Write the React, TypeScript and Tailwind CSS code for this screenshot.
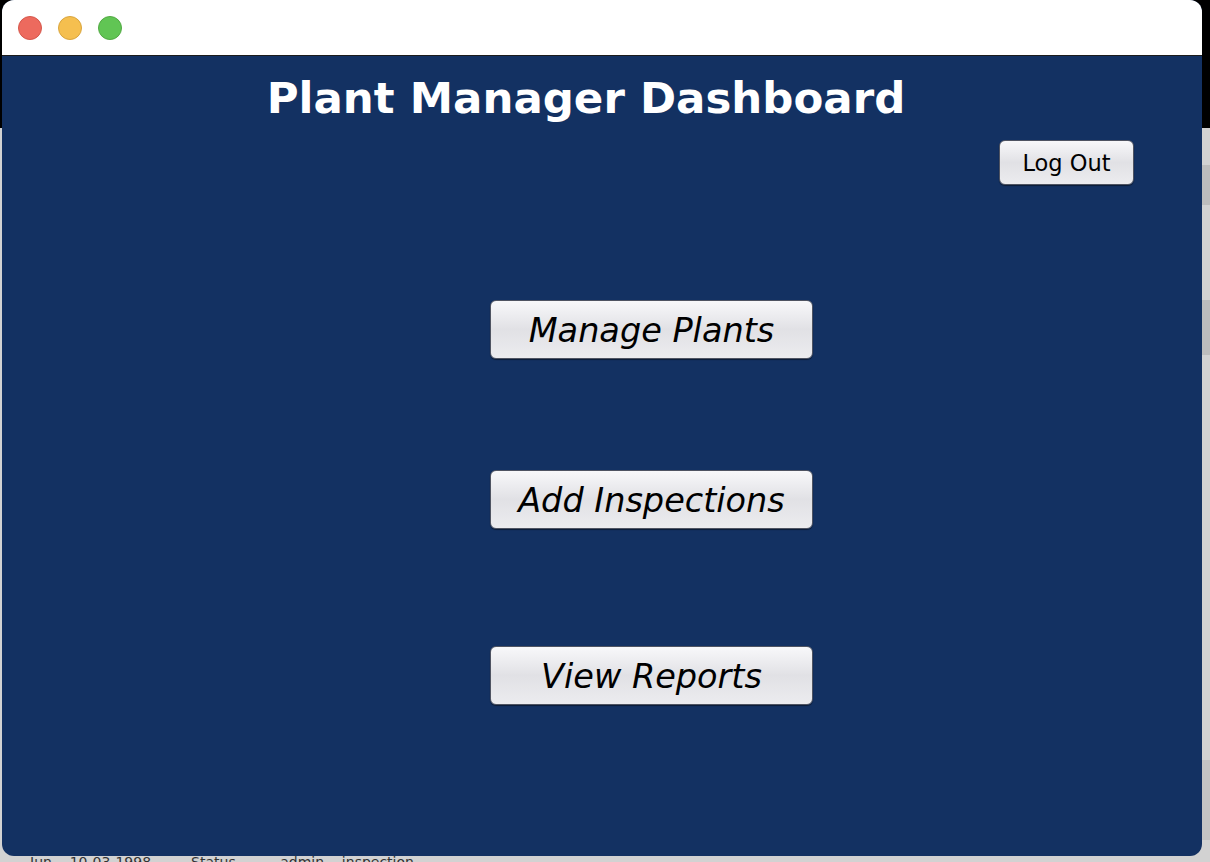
import React from "react";

const font = { fontFamily: '"DejaVu Sans", "Liberation Sans", sans-serif' };

function MacButton({ label, big }: { label: string; big?: boolean }) {
  return (
    <button
      className={
        big
          ? "w-[323px] h-[59px] rounded-[6px] border border-[#4f5462] bg-gradient-to-b from-[#f8f8fa] via-[#e1e1e5] to-[#ececef] shadow-[0_1px_1px_rgba(0,0,0,0.45)] text-black italic text-[33.5px] leading-none flex items-center justify-center pt-[2px]"
          : "w-[135px] h-[45px] rounded-[6px] border border-[#4f5462] bg-gradient-to-b from-[#f8f8fa] via-[#e1e1e5] to-[#ececef] shadow-[0_1px_1px_rgba(0,0,0,0.45)] text-black text-[22.5px] leading-none flex items-center justify-center pt-[2px]"
      }
      style={font}
    >
      {label}
    </button>
  );
}

export default function App() {
  return (
    <div className="relative w-[1210px] h-[862px] overflow-hidden bg-[#d2d2d2]" style={font}>
      {/* backdrop */}
      <div className="absolute left-0 top-0 w-[1210px] h-[128px] bg-black" />
      <div className="absolute right-0 top-[300px] w-[10px] h-[55px] bg-[#bdbdbd]" />
      <div className="absolute right-0 top-[165px] w-[10px] h-[40px] bg-[#bdbdbd]" />
      <div className="absolute right-0 top-[760px] w-[10px] h-[80px] bg-[#c4c4c4]" />
      <div className="absolute left-0 top-[850px] w-[700px] h-[12px] overflow-hidden">
        <div className="absolute left-[30px] top-[4px] text-[14px] leading-[16px] text-[#333] whitespace-pre">
          {"Jun    10-03-1998         Status          admin    inspection"}
        </div>
      </div>

      {/* window */}
      <div className="absolute left-[2px] top-0 w-[1200px] h-[856px] rounded-[12px] overflow-hidden flex flex-col bg-[#133162]">
        <div className="h-[56px] shrink-0 bg-white border-b border-[#1c1c1c] flex items-center gap-[16px] pl-[16px]">
          <div className="w-[24px] h-[24px] rounded-full bg-[#ed6a5e] border border-[#d5574b]" />
          <div className="w-[24px] h-[24px] rounded-full bg-[#f5bf4f] border border-[#d9a53e]" />
          <div className="w-[24px] h-[24px] rounded-full bg-[#61c554] border border-[#52a943]" />
        </div>
        <div className="flex-1 flex flex-col">
          <div className="h-[84px] flex items-center justify-center pr-[32px] pt-[2px]">
            <h1 className="text-white font-bold text-[43.5px] leading-none" style={font}>
              Plant Manager Dashboard
            </h1>
          </div>
          <div className="flex justify-end pr-[68px]">
            <MacButton label="Log Out" />
          </div>
          <div className="flex flex-col items-start pl-[488px] mt-[115px]">
            <MacButton label="Manage Plants" big />
            <div className="h-[111px]" />
            <MacButton label="Add Inspections" big />
            <div className="h-[117px]" />
            <MacButton label="View Reports" big />
          </div>
        </div>
      </div>
    </div>
  );
}
